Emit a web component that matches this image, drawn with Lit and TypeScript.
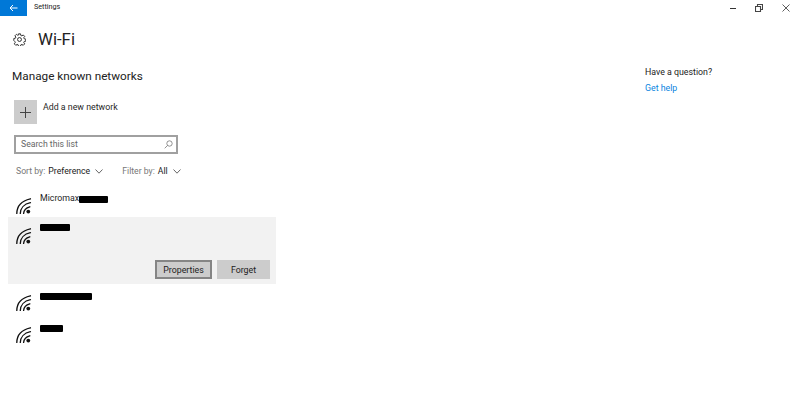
import { LitElement, html, css, svg } from "lit";
import { customElement } from "lit/decorators.js";

const wifi = html`<svg class="wifi" viewBox="0 0 16 16" fill="none" stroke="#111" stroke-width="1.350" stroke-linecap="round">
  ${svg`<path d="M0.800 15.500C0.900 8.500 5.500 2.800 14.400 0.800"/>
  <path d="M4.300 15.500C4.500 10.500 8 6 14.400 4.700"/>
  <path d="M7.600 15.500C7.800 12.300 10 9.800 13.800 8.800"/>
  <circle cx="12.300" cy="13.600" r="1.900" fill="#111" stroke="none"/>`}
</svg>`;

const gear = html`<svg class="gear" viewBox="0 0 14 14" fill="none" stroke="#222" stroke-width="1">
  ${svg`<circle cx="7" cy="7" r="2.100"/>
  <path d="M5.900 0.900h2.200l.3 1.700 1.200.5 1.400-1 1.600 1.600-1 1.400.5 1.200 1.700.3v2.200l-1.700.3-.5 1.200 1 1.400-1.600 1.600-1.400-1-1.200.5-.3 1.700H5.900l-.3-1.700-1.200-.5-1.400 1-1.600-1.600 1-1.400-.5-1.200L.9 8.100V5.900l1.700-.3.5-1.200-1-1.400 1.600-1.600 1.400 1 1.200-.5z"/>`}
</svg>`;

const chevron = html`<svg class="chev" viewBox="0 0 8 5" fill="none" stroke="#555" stroke-width="0.9">${svg`<path d="M0.500 0.500L4 4.200L7.500 0.500"/>`}</svg>`;

@customElement("app-root")
export class AppRoot extends LitElement {
  static styles = css`
    :host { display: block; width: 800px; height: 403px; overflow: hidden; background: #fff; color: #1f1f1f; font-family: Roboto, "Open Sans", sans-serif; }
    .bar { display: flex; align-items: center; height: 16px; }
    .back { width: 27px; height: 16px; background: #0078d7; display: flex; align-items: center; justify-content: center; }
    .back svg { width: 9px; height: 8px; }
    .title { margin-left: 7px; font-size: 7.200px; color: #222; flex: 1; position: relative; top: -2px; }
    .win { display: flex; margin-right: 1px; }
    .win span { width: 26.500px; height: 12px; display: flex; align-items: center; justify-content: center; }
    .win svg { width: 8px; height: 8px; }
    .page { display: flex; }
    .main { width: 620px; flex: none; display: flex; flex-direction: column; }
    .aside { padding-top: 49px; padding-left: 25px; font-size: 8.800px; }
    .aside div { line-height: 14px; color: #222; }
    .aside a { display: block; margin-top: 2px; color: #0a84e0; line-height: 14px; }
    .head { display: flex; align-items: center; height: 23px; margin-top: 12px; padding-left: 13px; gap: 12px; }
    .gear { width: 13px; height: 13px; }
    h1 { margin: 0; font-size: 16.800px; font-weight: 400; line-height: 23px; color: #222; }
    h2 { margin: 15px 0 0 12px; font-size: 11.750px; font-weight: 400; line-height: 20px; color: #222; }
    .add { display: flex; margin: 14px 0 0 14px; gap: 6px; }
    .tile { width: 23px; height: 24px; background: #cccccc; display: flex; align-items: center; justify-content: center; }
    .tile svg { width: 11px; height: 11px; }
    .add span { font-size: 8.800px; line-height: 14px; }
    .search { box-sizing: border-box; width: 164px; height: 19px; margin: 11px 0 0 14px; border: 2px solid #a0a0a0; display: flex; align-items: center; justify-content: space-between; padding: 0 3px 1px 5px; font-size: 8.700px; color: #666; }
    .search svg { width: 9px; height: 9px; }
    .sort { display: flex; align-items: center; height: 14px; margin: 10px 0 0 16px; font-size: 8.700px; color: #777; }
    .sort b { font-weight: 400; color: #222; margin-left: 3px; }
    .chev { width: 8px; height: 5px; margin-left: 5px; }
    .filter { margin-left: 19px; display: flex; align-items: center; }
    .row { display: flex; height: 32px; padding-left: 16px; }
    .row.first { height: 25px; }
    .list { margin-top: 14px; }
    .wifi { width: 16px; height: 16px; flex: none; margin-top: 6px; }
    .name { margin-left: 8px; font-size: 8.800px; line-height: 12px; display: flex; align-items: flex-start; }
    .ink { background: #000; height: 7px; border-radius: 1px; display: block; }
    .sel { width: 268px; height: 67px; margin-left: 8px; background: #f2f2f2; box-sizing: border-box; padding: 5px 0 0 8px; display: flex; flex-direction: column; }
    .selrow { display: flex; height: 38px; }
    .btns { display: flex; gap: 5px; justify-content: flex-end; padding-right: 6px; }
    .btn { box-sizing: border-box; height: 19px; background: #cccccc; font-size: 8.800px; display: flex; align-items: center; justify-content: center; color: #222; }
    .p { width: 57px; border: 2px solid #858585; }
    .f { width: 53px; }
    .after { margin-top: 5px; }
  `;

  render() {
    return html`
      <div class="bar">
        <div class="back"><svg viewBox="0 0 9 8" fill="none" stroke="#fff" stroke-width="1"><path d="M8.500 4H1M4 1L1 4l3 3"/></svg></div>
        <div class="title">Settings</div>
        <div class="win">
          <span><svg viewBox="0 0 8 8" stroke="#333" stroke-width="1"><path d="M1 4.500h6"/></svg></span>
          <span><svg viewBox="0 0 8 8" fill="none" stroke="#444" stroke-width="1.100"><path d="M.5 2.500h5v5h-5zM2.500 2.500V.5h5v5H5.500"/></svg></span>
          <span><svg viewBox="0 0 8 8" stroke="#333" stroke-width="0.8"><path d="M.5.5l7 7M7.500.5l-7 7"/></svg></span>
        </div>
      </div>
      <div class="page">
        <div class="main">
          <div class="head">${gear}<h1>Wi-Fi</h1></div>
          <h2>Manage known networks</h2>
          <div class="add">
            <div class="tile"><svg viewBox="0 0 11 11" stroke="#444" stroke-width="1"><path d="M5.500 0v11M0 5.500h11"/></svg></div>
            <span>Add a new network</span>
          </div>
          <div class="search">
            <span>Search this list</span>
            <svg viewBox="0 0 9 9" fill="none" stroke="#777" stroke-width="0.8"><circle cx="5.500" cy="3.500" r="2.700"/><path d="M3.600 5.400L.7 8.300"/></svg>
          </div>
          <div class="sort">
            Sort by:<b>Preference</b>${chevron}
            <span class="filter">Filter by:<b>All</b>${chevron}</span>
          </div>
          <div class="list">
            <div class="row first">${wifi}<div class="name">Micromax<span class="ink" style="width:29px;margin:4px 0 0 0"></span></div></div>
            <div class="sel">
              <div class="selrow">${wifi}<div class="name"><span class="ink" style="width:30px;margin-top:2px"></span></div></div>
              <div class="btns"><div class="btn p">Properties</div><div class="btn f">Forget</div></div>
            </div>
            <div class="row after">${wifi}<div class="name"><span class="ink" style="width:52px;margin-top:4px"></span></div></div>
            <div class="row">${wifi}<div class="name"><span class="ink" style="width:23px;margin-top:4px"></span></div></div>
          </div>
        </div>
        <div class="aside"><div>Have a question?</div><a>Get help</a></div>
      </div>
    `;
  }
}
